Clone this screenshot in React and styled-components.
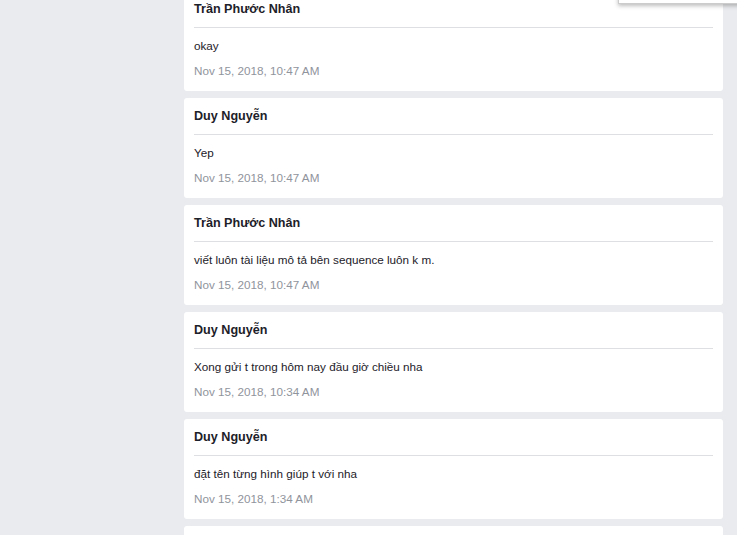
import styled, { createGlobalStyle } from "styled-components";

const messages = [
  { name: "Trần Phước Nhân", text: "okay", time: "Nov 15, 2018, 10:47 AM" },
  { name: "Duy Nguyễn", text: "Yep", time: "Nov 15, 2018, 10:47 AM" },
  { name: "Trần Phước Nhân", text: "viết luôn tài liệu mô tả bên sequence luôn k m.", time: "Nov 15, 2018, 10:47 AM" },
  { name: "Duy Nguyễn", text: "Xong gửi t trong hôm nay đầu giờ chiều nha", time: "Nov 15, 2018, 10:34 AM" },
  { name: "Duy Nguyễn", text: "đặt tên từng hình giúp t với nha", time: "Nov 15, 2018, 1:34 AM" },
];

const GlobalStyle = createGlobalStyle`
  html, body {
    margin: 0;
    height: 100%;
    overflow: hidden;
    background: #e9ebee;
    font-family: "Liberation Sans", Arial, sans-serif;
  }
`;

const Page = styled.div`
  position: relative;
  height: 535px;
  overflow: hidden;
`;

const Feed = styled.div`
  display: flex;
  flex-direction: column;
  gap: 7px;
  width: 539px;
  margin: -9px 0 0 184px;
`;

const Card = styled.div`
  background: #fff;
  border-radius: 3px;
  padding: 0 10px;
  min-height: ${({ $stub }) => ($stub ? "40px" : "auto")};
`;

const CardHeader = styled.div`
  height: 36px;
  border-bottom: 1px solid #dddfe2;
  display: flex;
  align-items: center;
`;

const Name = styled.span`
  font-size: 12.6px;
  font-weight: 700;
  color: #1d2129;
  margin-top: -1px;
`;

const CardBody = styled.div`
  padding: 10px 0 12px;
`;

const Text = styled.div`
  font-size: 11.7px;
  line-height: 16px;
  color: #1d2129;
`;

const Time = styled.div`
  margin-top: 9px;
  font-size: 11.7px;
  line-height: 16px;
  color: #90949c;
`;

const Dropdown = styled.div`
  position: absolute;
  top: -20px;
  left: 618px;
  width: 160px;
  height: 22px;
  background: #fff;
  border: 1px solid rgba(0, 0, 0, 0.2);
  box-shadow: 0 2px 4px rgba(0, 0, 0, 0.25);
`;

export default function App() {
  return (
    <>
      <GlobalStyle />
      <Page>
        <Feed>
          {messages.map((m, i) => (
            <Card key={i}>
              <CardHeader>
                <Name>{m.name}</Name>
              </CardHeader>
              <CardBody>
                <Text>{m.text}</Text>
                <Time>{m.time}</Time>
              </CardBody>
            </Card>
          ))}
          <Card $stub />
        </Feed>
        <Dropdown />
      </Page>
    </>
  );
}
